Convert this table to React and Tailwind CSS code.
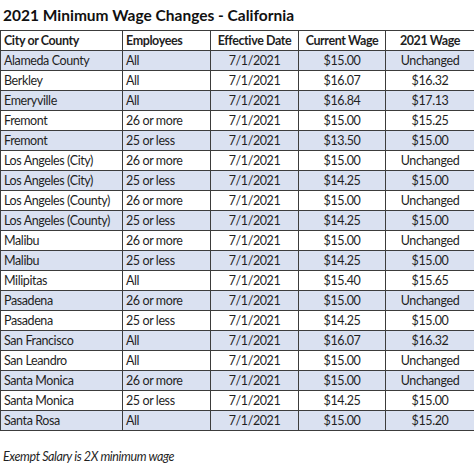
const rows = [
  ["Alameda County", "All", "7/1/2021", "$15.00", "Unchanged"],
  ["Berkley", "All", "7/1/2021", "$16.07", "$16.32"],
  ["Emeryville", "All", "7/1/2021", "$16.84", "$17.13"],
  ["Fremont", "26 or more", "7/1/2021", "$15.00", "$15.25"],
  ["Fremont", "25 or less", "7/1/2021", "$13.50", "$15.00"],
  ["Los Angeles (City)", "26 or more", "7/1/2021", "$15.00", "Unchanged"],
  ["Los Angeles (City)", "25 or less", "7/1/2021", "$14.25", "$15.00"],
  ["Los Angeles (County)", "26 or more", "7/1/2021", "$15.00", "Unchanged"],
  ["Los Angeles (County)", "25 or less", "7/1/2021", "$14.25", "$15.00"],
  ["Malibu", "26 or more", "7/1/2021", "$15.00", "Unchanged"],
  ["Malibu", "25 or less", "7/1/2021", "$14.25", "$15.00"],
  ["Milipitas", "All", "7/1/2021", "$15.40", "$15.65"],
  ["Pasadena", "26 or more", "7/1/2021", "$15.00", "Unchanged"],
  ["Pasadena", "25 or less", "7/1/2021", "$14.25", "$15.00"],
  ["San Francisco", "All", "7/1/2021", "$16.07", "$16.32"],
  ["San Leandro", "All", "7/1/2021", "$15.00", "Unchanged"],
  ["Santa Monica", "26 or more", "7/1/2021", "$15.00", "Unchanged"],
  ["Santa Monica", "25 or less", "7/1/2021", "$14.25", "$15.00"],
  ["Santa Rosa", "All", "7/1/2021", "$15.00", "$15.20"],
];

const App = () => {
  return (
    <div className="w-[474px] h-[465px] bg-white text-[#1f1f1f] font-['Lato','Open_Sans',sans-serif] overflow-hidden">
      <h1 className="h-[30px] pl-[3px] pt-[4px] text-[15.5px] font-bold leading-[22px] text-[#111]">
        2021 Minimum Wage Changes - California
      </h1>

      {/* Wage table */}
      <table className="w-[474px] table-fixed border-collapse text-[12.5px] leading-[17px] tracking-[-0.4px]">
        <colgroup>
          <col className="w-[122px]" />
          <col className="w-[88px]" />
          <col className="w-[88px]" />
          <col className="w-[87px]" />
          <col className="w-[89px]" />
        </colgroup>
        <thead>
          <tr className="h-[20px] bg-white">
            <th className="border-[1.5px] border-[#3c3c3c] px-[3px] py-0 text-left font-bold whitespace-nowrap">City or County</th>
            <th className="border-[1.5px] border-[#3c3c3c] px-[3px] py-0 text-left font-bold whitespace-nowrap">Employees</th>
            <th className="border-[1.5px] border-[#3c3c3c] px-[3px] py-0 text-center font-bold whitespace-nowrap">Effective Date</th>
            <th className="border-[1.5px] border-[#3c3c3c] px-[3px] py-0 text-center font-bold whitespace-nowrap">Current Wage</th>
            <th className="border-[1.5px] border-[#3c3c3c] px-[3px] py-0 text-center font-bold whitespace-nowrap">2021 Wage</th>
          </tr>
        </thead>
        <tbody>
          {rows.map((r, i) => (
            <tr key={i} className={i % 2 === 0 ? "h-[20px] bg-[#dae1f1]" : "h-[20px] bg-white"}>
              <td className="border-[1.5px] border-[#3c3c3c] px-[3px] py-0 whitespace-nowrap">{r[0]}</td>
              <td className="border-[1.5px] border-[#3c3c3c] px-[3px] py-0 whitespace-nowrap">{r[1]}</td>
              <td className="border-[1.5px] border-[#3c3c3c] px-[3px] py-0 text-center">{r[2]}</td>
              <td className="border-[1.5px] border-[#3c3c3c] px-[3px] py-0 text-center">{r[3]}</td>
              <td className="border-[1.5px] border-[#3c3c3c] px-[3px] py-0 text-center">{r[4]}</td>
            </tr>
          ))}
        </tbody>
      </table>

      <p className="pl-[3px] pt-[17px] text-[12.5px] italic leading-[18px] tracking-[-0.4px]">Exempt Salary is 2X minimum wage</p>
    </div>
  );
};

export default App;
